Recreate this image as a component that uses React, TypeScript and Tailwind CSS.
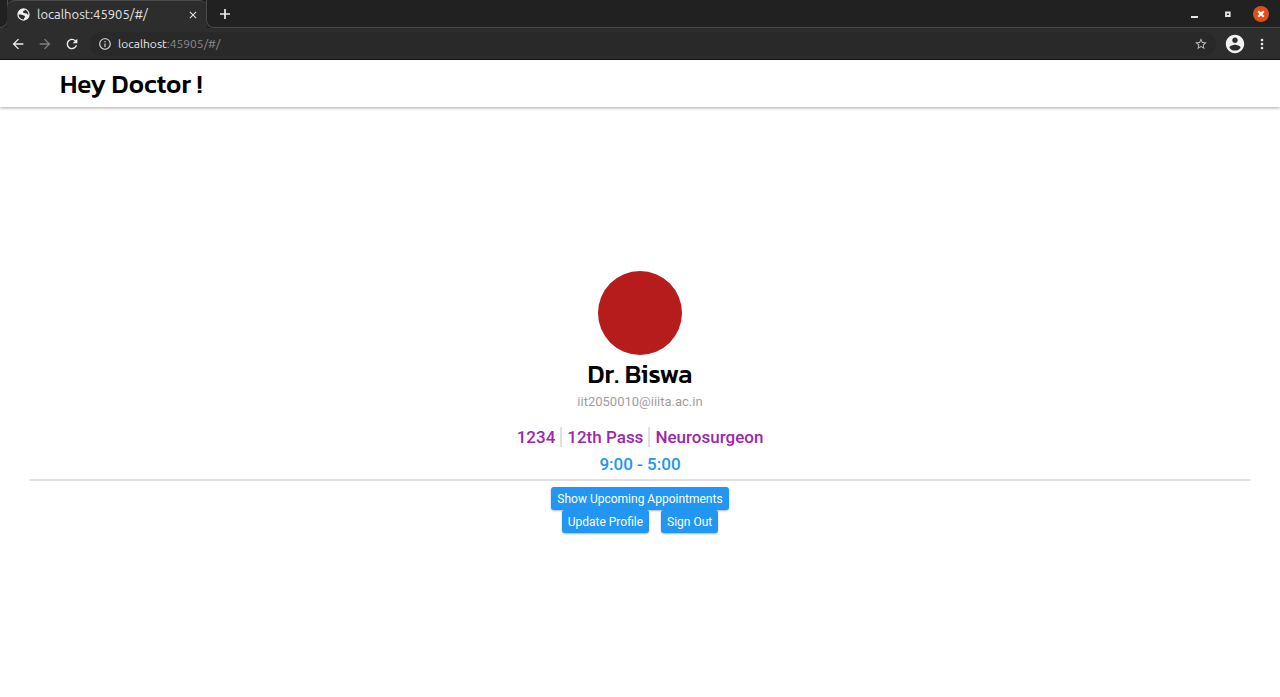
import type { ReactNode } from "react";
import {
  MdArrowBack,
  MdArrowForward,
  MdClose,
  MdInfoOutline,
  MdMoreVert,
  MdRefresh,
  MdStarBorder,
} from "react-icons/md";

function GlobeIcon() {
  return (
    <svg viewBox="0 0 16 16" className="size-[15px] text-[#f0f0f0]" aria-hidden="true">
      <circle cx="8" cy="8" r="5.900" fill="none" stroke="currentColor" strokeWidth="1.300" />
      <path
        fill="currentColor"
        d="M2 8C2 4.500 4.500 2 8 2l1.500.2-.3 1.600-1.700.7v1.300l1.800.9 2.200.1 1.200 1.400 1.200-.2c0 3.300-2.300 5.800-5.400 6l.1-2.200 1.300-1.200-.8-1.400-2.300-.6L5.200 8z"
      />
    </svg>
  );
}

function AccountIcon() {
  return (
    <svg viewBox="0 0 24 24" className="size-[22px]" fill="currentColor" aria-hidden="true">
      <path d="M12 2C6.480 2 2 6.480 2 12s4.480 10 10 10 10-4.480 10-10S17.520 2 12 2zm0 3c1.660 0 3 1.340 3 3s-1.340 3-3 3-3-1.340-3-3 1.340-3 3-3zm0 14.200c-2.500 0-4.710-1.280-6-3.220.030-1.990 4-3.080 6-3.080 1.990 0 5.970 1.090 6 3.080-1.290 1.940-3.500 3.220-6 3.220z" />
    </svg>
  );
}

function TabStrip() {
  return (
    <div className="flex h-7 items-stretch bg-[#212121]">
      <div className="w-2 rounded-br-lg border-b border-r border-[#4a4a4a]" />
      <div className="-ml-px flex w-[200px] items-center rounded-t-lg border-t border-[#4a4a4a] bg-[#2d2d2d] pl-[9px] pr-2">
        <GlobeIcon />
        <span className="ml-1.5 flex-1 font-['Ubuntu','Noto_Sans',sans-serif] text-[13px] text-[#e2e2e2]">
          localhost:45905/#/
        </span>
        <button aria-label="Close tab" className="text-[#e8e8e8]">
          <MdClose className="size-3" />
        </button>
      </div>
      <div className="-ml-px flex flex-1 items-center rounded-bl-lg border-b border-l border-[#4a4a4a] pl-[11px] pr-[11px]">
        <button aria-label="New tab" className="text-[#ededed]">
          <svg viewBox="0 0 14 14" className="size-3.5" fill="none" stroke="currentColor" strokeWidth="1.7">
            <path d="M7 2v10M2 7h10" />
          </svg>
        </button>
        <div className="ml-auto flex items-center gap-[17px]">
          <button aria-label="Minimize" className="text-[#e6e6e6]">
            <svg viewBox="0 0 16 16" className="size-4" fill="currentColor">
              <path d="M4 10h7v2h-7z" />
            </svg>
          </button>
          <button aria-label="Maximize" className="text-[#e6e6e6]">
            <svg viewBox="0 0 16 16" className="size-4" fill="none" stroke="currentColor" strokeWidth="1.800">
              <path d="M6 6.500h3.700v3.500h-3.700z" />
            </svg>
          </button>
          <button aria-label="Close window" className="rounded-full bg-[#e04e1b] text-white">
            <svg viewBox="0 0 16 16" className="size-4" fill="none" stroke="currentColor" strokeWidth="2">
              <path d="M5.200 5.200l5.600 5.600M10.800 5.200l-5.600 5.600" />
            </svg>
          </button>
        </div>
      </div>
    </div>
  );
}

function Toolbar() {
  return (
    <div className="flex h-8 items-center border-b border-[#141414] bg-[#2d2d2d] pl-2.5 pr-2.5">
      <div className="flex items-center gap-[11px]">
        <button aria-label="Back" className="text-[#ededed]">
          <MdArrowBack className="size-4" />
        </button>
        <button aria-label="Forward" className="text-[#808080]">
          <MdArrowForward className="size-4" />
        </button>
        <button aria-label="Reload" className="text-[#ededed]">
          <MdRefresh className="size-4" />
        </button>
      </div>
      <div className="ml-2.5 flex h-6 flex-1 items-center rounded-full bg-[#292929] px-2">
        <MdInfoOutline className="size-3.5 text-[#d6d6d6]" />
        <span className="ml-1.5 flex-1 font-['Ubuntu','Noto_Sans',sans-serif] text-xs text-[#8e8e8e]">
          <span className="text-[#e8e8e8]">localhost</span>:45905/#/
        </span>
        <button aria-label="Bookmark this page" className="text-[#bdbdbd]">
          <MdStarBorder className="size-3.5" />
        </button>
      </div>
      <div className="ml-2 flex items-center gap-2">
        <button aria-label="Account" className="text-[#f2f2f2]">
          <AccountIcon />
        </button>
        <button aria-label="Menu" className="text-[#ededed]">
          <MdMoreVert className="size-4" />
        </button>
      </div>
    </div>
  );
}

function ActionButton({ children }: { children: ReactNode }) {
  return (
    <button className="h-[23px] rounded-[3px] bg-[#2196f3] px-1.5 text-xs text-white shadow-[0_1px_2px_rgba(0,0,0,0.3)]">
      {children}
    </button>
  );
}

export default function App() {
  return (
    <div className="flex min-h-screen flex-col bg-white font-[Roboto,sans-serif]">
      <TabStrip />
      <Toolbar />
      <header className="flex h-[47px] items-center px-[60px] shadow-[0_1px_3px_rgba(0,0,0,0.35)]">
        <h1 className="font-['Kanit','Inter',sans-serif] text-[26px] font-medium text-black">Hey Doctor !</h1>
      </header>
      <main className="flex flex-1 flex-col items-center justify-center px-[30px]">
        <div className="size-[84px] rounded-full bg-[#b71c1c]" />
        <h2 className="font-['Kanit','Inter',sans-serif] text-[26px]/[38px] font-medium text-black">Dr. Biswa</h2>
        <p className="text-[13px]/[18px] text-[#9e9e9e]">iit2050010@iiita.ac.in</p>
        <div className="mt-4 flex h-5 items-center divide-x-2 divide-[#e0e0e0] text-[17px]/5 font-medium text-[#9c27b0]">
          <span className="pr-[5px]">1234</span>
          <span className="px-[5px]">12th Pass</span>
          <span className="pl-[5px]">Neurosurgeon</span>
        </div>
        <p className="mt-1 text-[17px]/[26px] font-medium text-[#2196f3]">9:00 - 5:00</p>
        <hr className="mt-0.5 w-full border-t-2 border-[#e0e0e0]" />
        <div className="mt-1.5 flex flex-col items-center">
          <ActionButton>Show Upcoming Appointments</ActionButton>
          <div className="flex gap-3">
            <ActionButton>Update Profile</ActionButton>
            <ActionButton>Sign Out</ActionButton>
          </div>
        </div>
      </main>
    </div>
  );
}
